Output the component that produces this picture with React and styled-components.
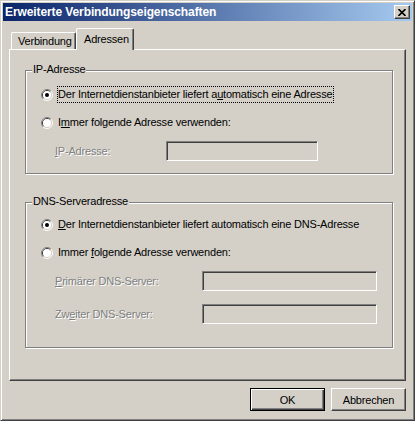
import styled, { createGlobalStyle } from "styled-components";

const GlobalStyle = createGlobalStyle`
  html, body {
    margin: 0;
    padding: 0;
    background: #d4d0c8;
  }
  body {
    font-family: "Liberation Sans", Arial, sans-serif;
    font-size: 11px;
    letter-spacing: -0.2px;
    color: #000;
  }
`;

const Window = styled.div`
  width: 415px;
  height: 421px;
  box-sizing: border-box;
  background: #d4d0c8;
  border: 1px solid;
  border-color: #d4d0c8 #404040 #404040 #d4d0c8;
  box-shadow: inset 1px 1px 0 #fff, inset -1px -1px 0 #808080;
  padding: 2px;
  display: flex;
  flex-direction: column;
`;

const TitleBar = styled.div`
  height: 18px;
  flex: none;
  display: flex;
  align-items: center;
  justify-content: space-between;
  padding: 0 2px 0 2px;
  background: linear-gradient(to right, #0a246a, #a6caf0);
`;

const TitleText = styled.span`
  color: #fff;
  font-weight: bold;
  font-size: 12px;
  letter-spacing: -0.1px;
  line-height: 18px;
  white-space: nowrap;
`;

const CloseButton = styled.div`
  width: 16px;
  height: 14px;
  box-sizing: border-box;
  background: #d4d0c8;
  border: 1px solid;
  border-color: #fff #404040 #404040 #fff;
  box-shadow: inset -1px -1px 0 #808080;
  display: flex;
  align-items: center;
  justify-content: center;
`;

const Body = styled.div`
  flex: 1;
  display: flex;
  flex-direction: column;
  padding: 7px 6px 7px 6px;
`;

const TabStrip = styled.div`
  height: 21px;
  display: flex;
  align-items: flex-end;
  padding-left: 2px;
`;

const Tab = styled.div`
  position: relative;
  z-index: ${(p) => (p.$active ? 1 : 0)};
  box-sizing: border-box;
  width: ${(p) => p.$width}px;
  height: ${(p) => (p.$active ? 22 : 17)}px;
  margin-bottom: ${(p) => (p.$active ? -1 : 0)}px;
  padding: ${(p) => (p.$active ? "4px 0 0 7px" : "2px 0 0 6px")};
  background: #d4d0c8;
  border-top: 1px solid #fff;
  border-left: 1px solid #fff;
  border-right: 1px solid #404040;
  border-radius: 2px 2px 0 0;
  box-shadow: inset -1px 0 0 #808080;
  line-height: 13px;
  white-space: nowrap;
`;

const Panel = styled.div`
  height: 332px;
  box-sizing: border-box;
  border: 1px solid;
  border-color: #fff #404040 #404040 #fff;
  box-shadow: inset -1px -1px 0 #808080;
  padding: 20px 12px 31px 15px;
  display: flex;
  flex-direction: column;
  gap: 28px;
`;

const Group = styled.div`
  position: relative;
  box-sizing: border-box;
  height: ${(p) => p.$height}px;
  border: 1px solid #808080;
  box-shadow: inset 1px 1px 0 #fff, 1px 1px 0 #fff;
  padding-top: ${(p) => p.$top}px;
  display: flex;
  flex-direction: column;
`;

const Legend = styled.span`
  position: absolute;
  top: -8px;
  left: 6px;
  padding: 0 1px;
  background: #d4d0c8;
  line-height: 13px;
  white-space: nowrap;
`;

const RadioRow = styled.div`
  height: 17px;
  margin-top: ${(p) => p.$gap || 0}px;
  display: flex;
  align-items: center;
  padding-left: 15px;
`;

const RadioLabel = styled.span`
  margin-left: 4px;
  padding: 1px 1px 1px 0;
  line-height: 13px;
  border: 1px dotted ${(p) => (p.$focused ? "#000" : "transparent")};
  white-space: nowrap;
`;

const FieldRow = styled.div`
  margin-top: ${(p) => p.$gap}px;
  display: grid;
  grid-template-columns: ${(p) => p.$labelWidth}px ${(p) => p.$inputWidth}px;
  align-items: center;
  padding-left: 29px;
`;

const FieldLabel = styled.span`
  color: #808080;
  text-shadow: 1px 1px 0 #fff;
  white-space: nowrap;
`;

const TextBox = styled.input`
  height: 20px;
  width: 100%;
  box-sizing: border-box;
  margin: 0;
  padding: 0;
  background: #d4d0c8;
  border: 1px solid;
  border-color: #808080 #fff #fff #808080;
  box-shadow: inset 1px 1px 0 #404040, inset -1px -1px 0 #d4d0c8;
  outline: none;
`;

const ButtonRow = styled.div`
  margin-top: 7px;
  display: flex;
  justify-content: flex-end;
  gap: 6px;
`;

const Button = styled.button`
  width: 75px;
  height: 23px;
  box-sizing: border-box;
  margin: 0;
  padding: 0;
  font: inherit;
  letter-spacing: inherit;
  color: #000;
  background: #d4d0c8;
  border: 1px solid;
  border-color: ${(p) => (p.$default ? "#000" : "#fff #404040 #404040 #fff")};
  box-shadow: ${(p) =>
    p.$default
      ? "inset 1px 1px 0 #fff, inset -1px -1px 0 #404040, inset -2px -2px 0 #808080"
      : "inset -1px -1px 0 #808080"};
`;

const U = styled.span`
  text-decoration: underline;
`;

function Radio({ checked }) {
  return (
    <svg width="12" height="12" viewBox="0 0 12 12">
      <path d="M2.11 9.89 A5.5 5.5 0 0 1 9.89 2.11" fill="none" stroke="#808080" />
      <path d="M9.89 2.11 A5.5 5.5 0 0 1 2.11 9.89" fill="none" stroke="#fff" />
      <path d="M2.82 9.18 A4.5 4.5 0 0 1 9.18 2.82" fill="none" stroke="#404040" />
      <path d="M9.18 2.82 A4.5 4.5 0 0 1 2.82 9.18" fill="none" stroke="#d4d0c8" />
      <circle cx="6" cy="6" r="4" fill="#fff" />
      {checked && <circle cx="6" cy="6" r="2" fill="#000" />}
    </svg>
  );
}

export default function App() {
  return (
    <Window>
      <GlobalStyle />
      <TitleBar>
        <TitleText>Erweiterte Verbindungseigenschaften</TitleText>
        <CloseButton>
          <svg width="8" height="7" viewBox="0 0 8 7">
            <path d="M0.5 0 L7.5 7 M7.5 0 L0.5 7" stroke="#000" strokeWidth="1.6" />
          </svg>
        </CloseButton>
      </TitleBar>

      <Body>
        <TabStrip>
          <Tab $width={65}>Verbindung</Tab>
          <Tab $width={58} $active>
            Adressen
          </Tab>
        </TabStrip>

        <Panel>
          <Group $height={104} $top={15}>
            <Legend>IP-Adresse</Legend>
            <RadioRow>
              <Radio checked />
              <RadioLabel $focused>
                Der Internetdienstanbieter liefert a<U>u</U>tomatisch eine Adresse
              </RadioLabel>
            </RadioRow>
            <RadioRow $gap={11}>
              <Radio />
              <RadioLabel>
                I<U>m</U>mer folgende Adresse verwenden:
              </RadioLabel>
            </RadioRow>
            <FieldRow $gap={10} $labelWidth={111} $inputWidth={152}>
              <FieldLabel>
                <U>I</U>P-Adresse:
              </FieldLabel>
              <TextBox disabled />
            </FieldRow>
          </Group>

          <Group $height={146} $top={13}>
            <Legend>DNS-Serveradresse</Legend>
            <RadioRow>
              <Radio checked />
              <RadioLabel>
                <U>D</U>er Internetdienstanbieter liefert automatisch eine DNS-Adresse
              </RadioLabel>
            </RadioRow>
            <RadioRow $gap={11}>
              <Radio />
              <RadioLabel>
                Immer <U>f</U>olgende Adresse verwenden:
              </RadioLabel>
            </RadioRow>
            <FieldRow $gap={10} $labelWidth={147} $inputWidth={175}>
              <FieldLabel>
                <U>P</U>rimärer DNS-Server:
              </FieldLabel>
              <TextBox disabled />
            </FieldRow>
            <FieldRow $gap={13} $labelWidth={147} $inputWidth={175}>
              <FieldLabel>
                Zw<U>e</U>iter DNS-Server:
              </FieldLabel>
              <TextBox disabled />
            </FieldRow>
          </Group>
        </Panel>

        <ButtonRow>
          <Button $default>OK</Button>
          <Button>Abbrechen</Button>
        </ButtonRow>
      </Body>
    </Window>
  );
}
